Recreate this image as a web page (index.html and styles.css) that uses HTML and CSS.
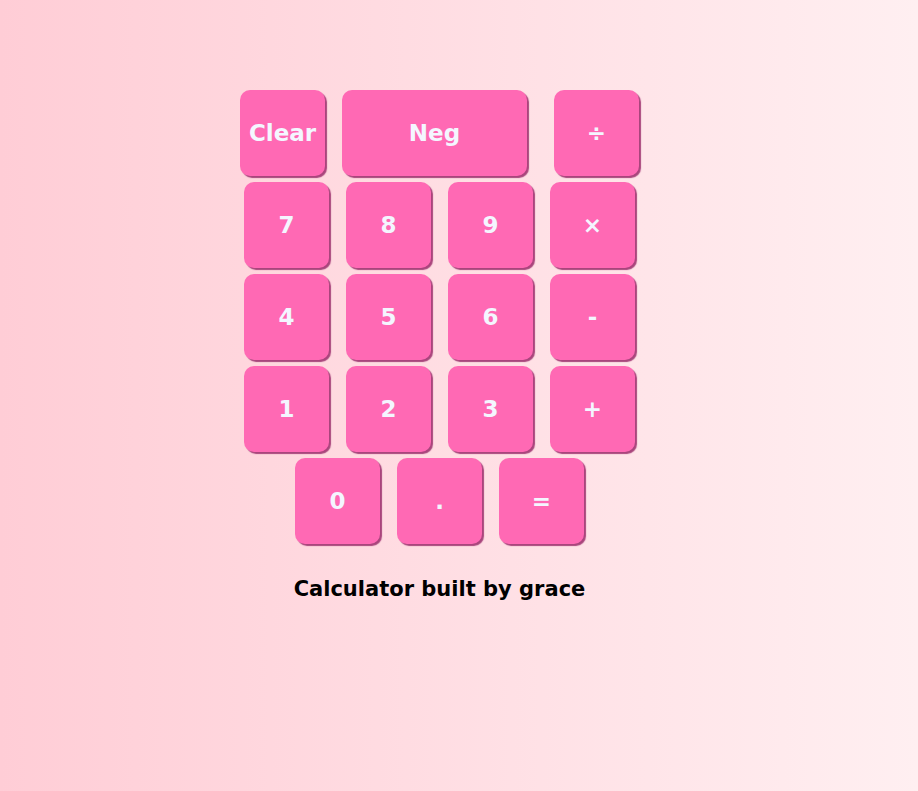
FILE: index.html
```html
<!DOCTYPE html>
<html>
<head>
<meta charset="utf-8">
<title>Calculator</title>
<link rel="stylesheet" href="styles.css">
</head>
<body>
<main class="calc">
  <div class="row row-top">
    <button class="key">Clear</button>
    <button class="key key-wide">Neg</button>
    <button class="key key-div">÷</button>
  </div>
  <div class="row">
    <button class="key">7</button>
    <button class="key">8</button>
    <button class="key">9</button>
    <button class="key">×</button>
  </div>
  <div class="row">
    <button class="key">4</button>
    <button class="key">5</button>
    <button class="key">6</button>
    <button class="key">-</button>
  </div>
  <div class="row">
    <button class="key">1</button>
    <button class="key">2</button>
    <button class="key">3</button>
    <button class="key">+</button>
  </div>
  <div class="row">
    <button class="key">0</button>
    <button class="key">.</button>
    <button class="key">=</button>
  </div>
  <h1 class="credit">Calculator built by grace</h1>
</main>
</body>
</html>
```
FILE: styles.css
```css
html, body {
  margin: 0;
  height: 100%;
}
body {
  background: linear-gradient(to right, #ffcdd6, #ffeff1);
  font-family: "DejaVu Sans", sans-serif;
}
.calc {
  width: 401px;
  margin-left: 240px;
  padding-top: 90px;
  display: flex;
  flex-direction: column;
  gap: 6px;
}
.row {
  display: flex;
  justify-content: center;
  gap: 17px;
  padding-right: 2px;
}
.row-top {
  justify-content: flex-start;
}
.key-div {
  margin-left: 10px;
}
.key {
  width: 85px;
  height: 86px;
  border: none;
  border-radius: 10px;
  background: #ff69b4;
  color: #f4f6ff;
  font-family: "DejaVu Sans", sans-serif;
  font-weight: 700;
  font-size: 23px;
  box-shadow: 2px 2px 1px #a9457c;
  padding: 0;
}
.key-wide {
  width: 185px;
}
.credit {
  margin: 27px 0 0;
  text-align: center;
  font-size: 21px;
  font-weight: 700;
  color: #000;
  padding-right: 2px;
}
```
